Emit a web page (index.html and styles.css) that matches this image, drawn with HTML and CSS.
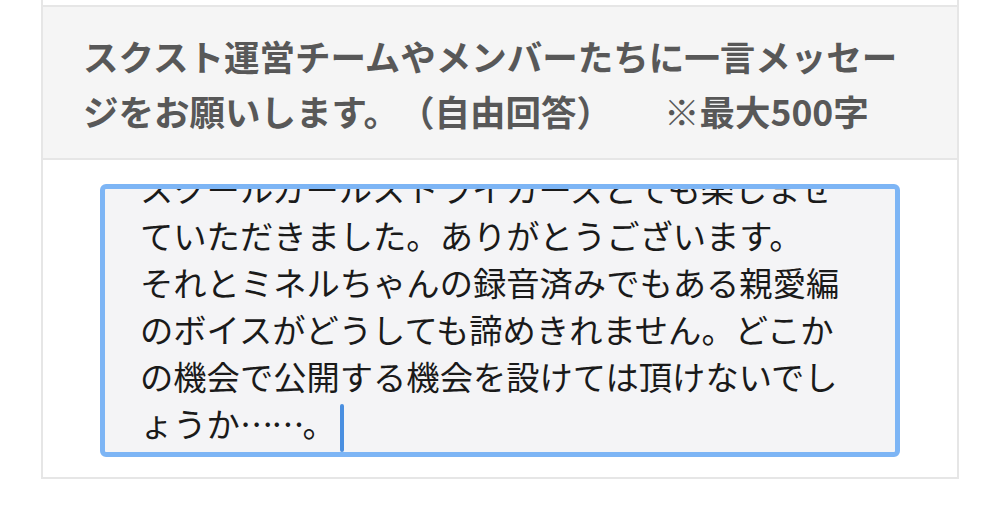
FILE: index.html
```html
<!DOCTYPE html>
<html lang="ja">
<head>
  <meta charset="UTF-8" />
  <meta name="viewport" content="width=device-width, initial-scale=1.0"/>
  <title>アンケート</title>
  <link rel="stylesheet" href="styles.css">
</head>
<body>

  <div class="card">
    <div class="row prev"></div>

    <div class="row question">
      <p>スクスト運営チームやメンバーたちに一言メッセー<br>ジをお願いします。（自由回答）<span class="limit">※最大500字</span></p>
    </div>

    <div class="row answer">
      <div class="textbox">
        <div class="lines">
          <p>スクールガールストライカーズとても楽しませ</p>
          <p>ていただきました。ありがとうございます。</p>
          <p>それとミネルちゃんの録音済みでもある親愛編</p>
          <p>のボイスがどうしても諦めきれません。どこか</p>
          <p>の機会で公開する機会を設けては頂けないでし</p>
          <p>ょうか<span class="dots">……。</span><span class="caret"></span></p>
        </div>
      </div>
    </div>
  </div>

</body>
</html>
```

FILE: styles.css
```css
body {
  margin: 0;
  background-color: #fff;
  font-family: "Noto Sans CJK JP", "Noto Sans", sans-serif;
  text-spacing-trim: space-all;
}
.card {
  margin-left: 41px;
  width: 914px;
  border: 2px solid #e6e6e6;
  border-top: none;
}
.row {
  border-bottom: 2px solid #e6e6e6;
}
.row:last-child {
  border-bottom: none;
}
.prev {
  height: 5px;
  background-color: #fff;
}
.question {
  background-color: #f5f5f5;
  padding: 21px 40px 20px;
}
.question p {
  margin: 0;
  font-size: 35.5px;
  line-height: 55px;
  font-weight: bold;
  color: #585858;
  white-space: nowrap;
}
.limit {
  margin-left: 52px;
}
.answer {
  padding: 24px 57px 20px;
}
.textbox {
  width: 755px;
  height: 263px;
  border: 5px solid #7db5f5;
  border-radius: 6px;
  background-color: #f4f4f6;
  padding: 0 0 0 35px;
  overflow: hidden;
  display: flex;
  flex-direction: column;
  justify-content: flex-end;
}
.lines p {
  margin: 0;
  font-size: 33.3px;
  line-height: 47px;
  color: #1a1a1a;
  white-space: nowrap;
}
.dots {
  letter-spacing: -2px;
}
.caret {
  display: inline-block;
  width: 4px;
  height: 48px;
  margin-left: 6px;
  border-radius: 2px;
  background-color: #4a8fe0;
  vertical-align: middle;
}
```
